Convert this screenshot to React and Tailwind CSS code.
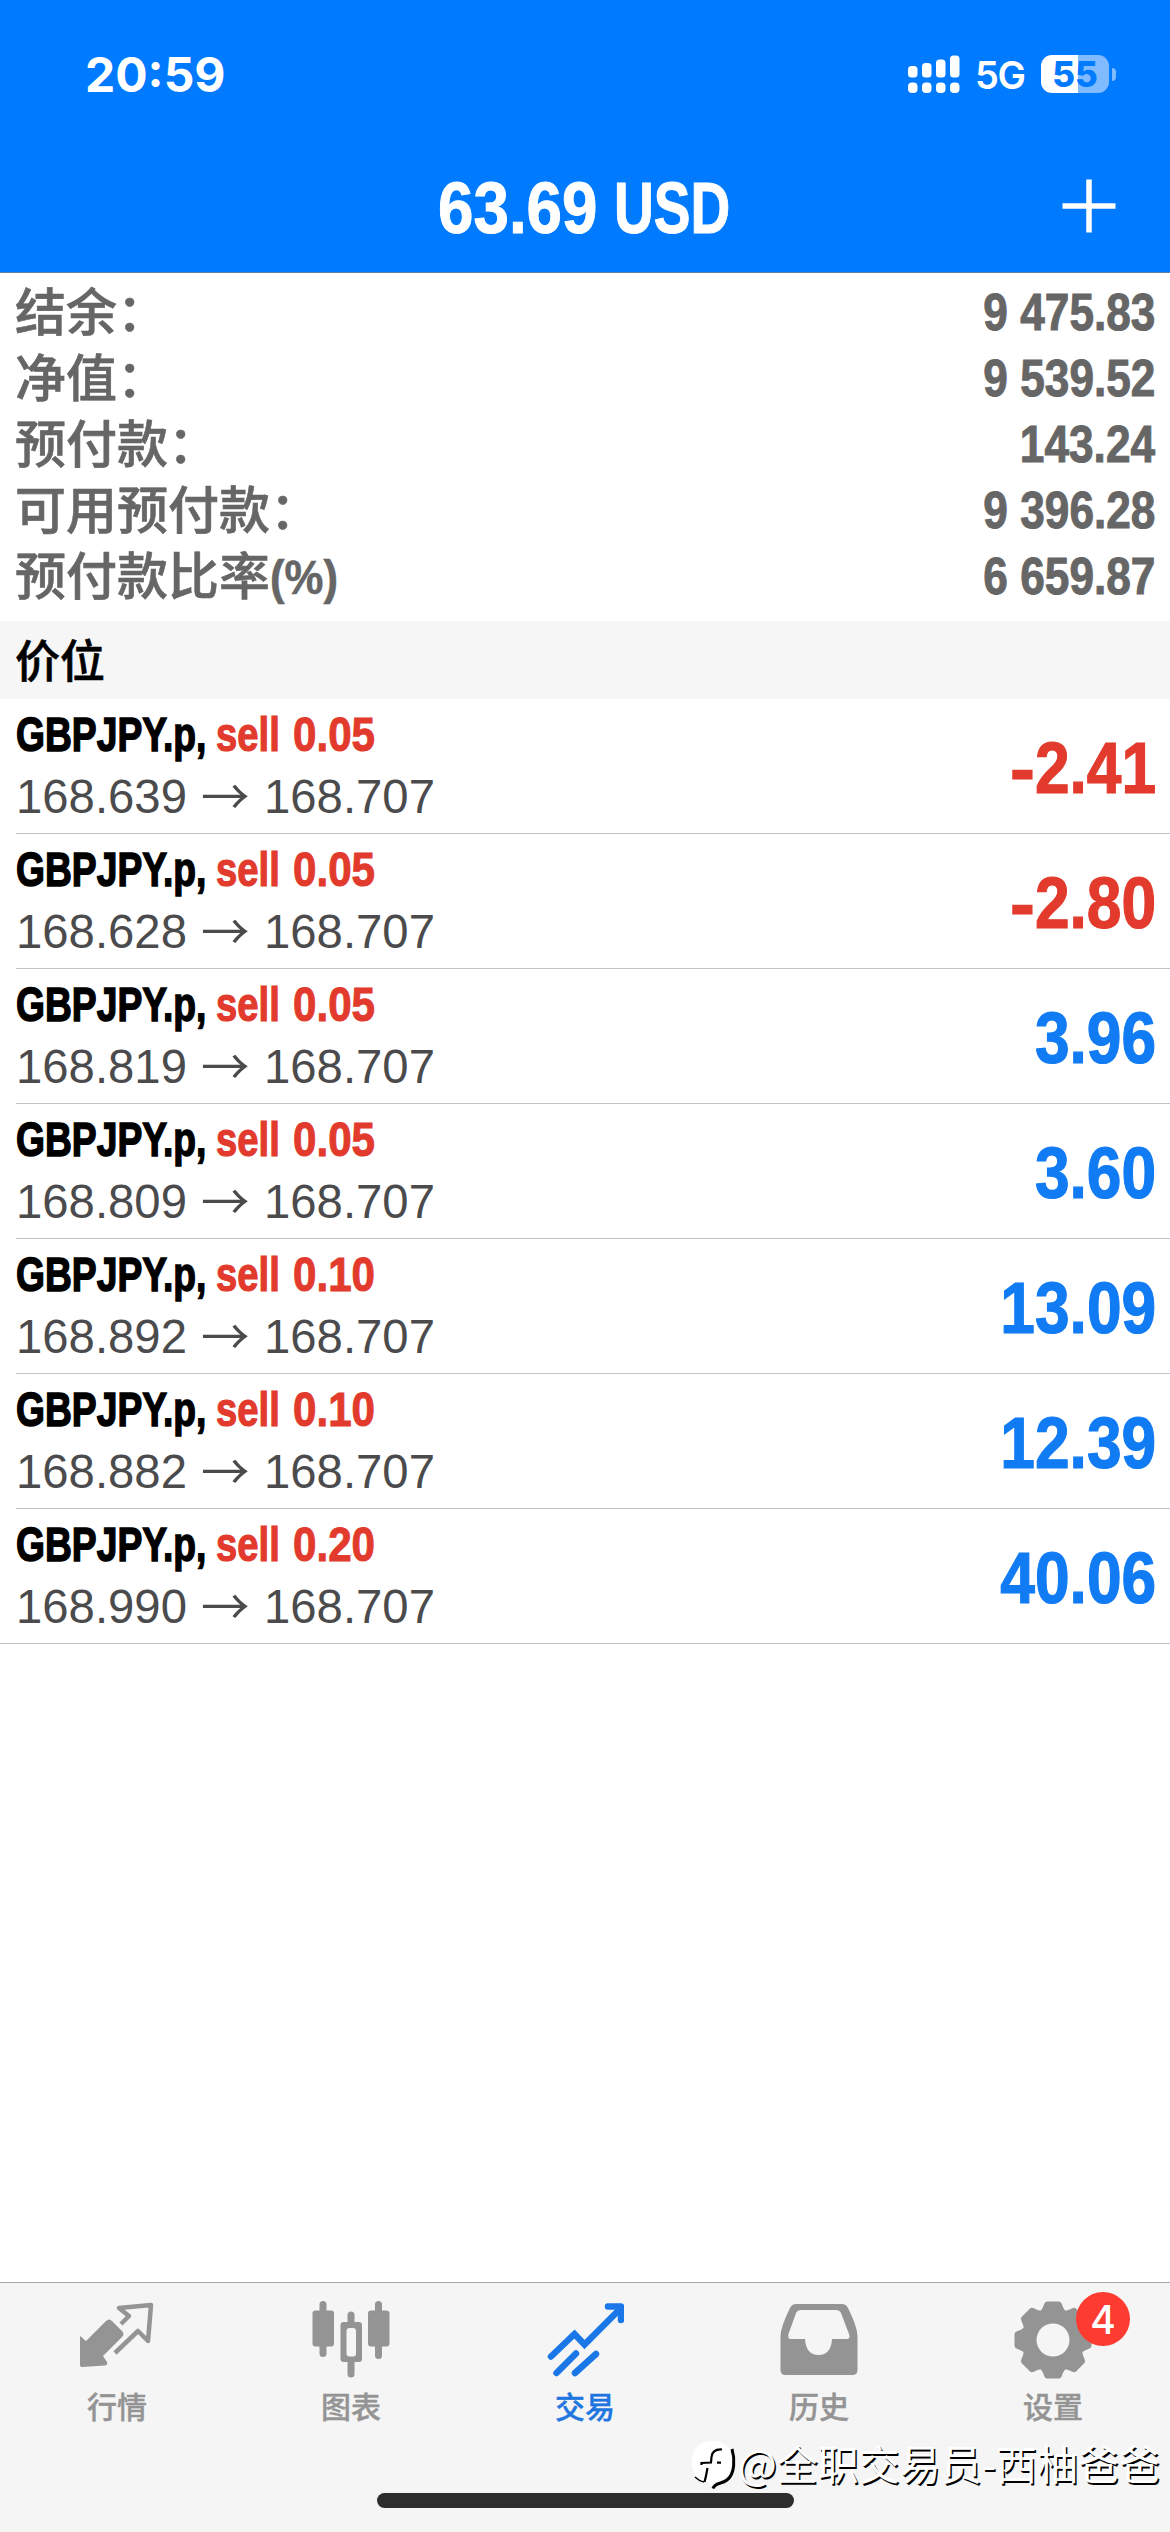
import React from "react";

const SANS = "font-['Liberation_Sans',Arial,sans-serif]";
const CJK = "font-['Liberation_Sans','Noto_Sans_CJK_SC',sans-serif]";

const summary = [
  { label: "结余：", value: "9 475.83" },
  { label: "净值：", value: "9 539.52" },
  { label: "预付款：", value: "143.24" },
  { label: "可用预付款：", value: "9 396.28" },
  { label: "预付款比率", suffix: "(%)", value: "6 659.87" },
];

const positions = [
  { lots: "0.05", open: "168.639", profit: "-2.41" },
  { lots: "0.05", open: "168.628", profit: "-2.80" },
  { lots: "0.05", open: "168.819", profit: "3.96" },
  { lots: "0.05", open: "168.809", profit: "3.60" },
  { lots: "0.10", open: "168.892", profit: "13.09" },
  { lots: "0.10", open: "168.882", profit: "12.39" },
  { lots: "0.20", open: "168.990", profit: "40.06" },
];

function Signal() {
  return (
    <svg width="52" height="38" viewBox="0 0 52 38" fill="white">
      <rect x="0" y="11" width="9.5" height="11.5" rx="3.5" />
      <rect x="14" y="8" width="9.5" height="14.5" rx="3.5" />
      <rect x="28" y="4.5" width="9.5" height="18" rx="3.5" />
      <rect x="42" y="0.5" width="9.5" height="22" rx="3.5" />
      <rect x="0" y="27.5" width="9.5" height="10.5" rx="4" />
      <rect x="14" y="27.5" width="9.5" height="10.5" rx="4" />
      <rect x="28" y="27.5" width="9.5" height="10.5" rx="4" />
      <rect x="42" y="27.5" width="9.5" height="10.5" rx="4" />
    </svg>
  );
}

function StatusBar() {
  return (
    <div className="flex h-[148px] items-center justify-between pl-[85px] pr-[54px] font-['Inter',sans-serif] text-white">
      <div className="pt-[2px] text-[48px] leading-none font-bold">20:59</div>
      <div className="flex items-center">
        <Signal />
        <div className="ml-[15px] w-[52px] pt-[2px] text-[38px] leading-none font-semibold tracking-[-1.5px] whitespace-nowrap">5G</div>
        <div className="ml-[14px] flex h-[38px] w-[68px] items-center justify-center rounded-[11px] bg-[linear-gradient(90deg,#fff_0_54%,#80bbff_54%)] text-[35px] leading-none font-extrabold text-[#007aff]">
          55
        </div>
        <div className="ml-[3px] h-[13px] w-[4px] rounded-r-full bg-[#80bbff]" />
      </div>
    </div>
  );
}

function Header() {
  return (
    <header className="h-[273px] border-b border-[#5b7fae] bg-[#007aff]">
      <StatusBar />
      <div className="grid h-[115px] grid-cols-[200px_1fr_200px] items-center text-white">
        <div />
        <div
          className={`${SANS} flex justify-center pt-[4px] text-[72px] leading-none font-bold whitespace-nowrap [-webkit-text-stroke:1px_white]`}
        >
          <span className="w-[176px] origin-left scale-x-[0.885]">63.69</span>
          <span className="w-[118px] origin-left scale-x-[0.765]">USD</span>
        </div>
        <div className="flex justify-end pr-[54px]">
          <svg width="54" height="54" viewBox="0 0 54 54" stroke="white" strokeWidth="5.5">
            <path d="M27 0.5v53M0.5 27h53" />
          </svg>
        </div>
      </div>
    </header>
  );
}

function SummaryRow({ label, suffix, value }) {
  return (
    <div className="flex h-[66px] items-center justify-between pr-[15px] pl-[15px] text-[#666666]">
      <div
        className={`${CJK} flex items-center pt-[4px] text-[51px] leading-[66px] font-medium whitespace-nowrap [-webkit-text-stroke:0.6px_#666666]`}
      >
        {label}
        {suffix && (
          <span className="inline-block origin-left scale-x-[0.91] text-[48px] font-bold">{suffix}</span>
        )}
      </div>
      <div
        className={`${SANS} origin-right scale-x-[0.85] text-[52px] leading-[66px] font-bold whitespace-nowrap [-webkit-text-stroke:1px_#666666]`}
      >
        {value}
      </div>
    </div>
  );
}

function PositionRow({ lots, open, profit, last }) {
  const loss = profit.startsWith("-");
  return (
    <div className={last ? "border-b border-[#c4c4c6]" : "ml-4 border-b border-[#c4c4c6]"}>
      <div className={`${SANS} flex h-[134px] items-center justify-between pr-[14px] ${last ? "pl-4" : ""}`}>
        <div className="flex h-full flex-col pt-[3px]">
          <div className="flex h-[63px] items-center text-[49px] leading-[62px] font-bold whitespace-nowrap">
            <div className="w-[200px] text-black [-webkit-text-stroke:1.5px_black]">
              <span className="inline-block origin-left scale-x-[0.76]">GBPJPY.p,</span>
            </div>
            <div className="w-[77px] text-[#e23a2c] [-webkit-text-stroke:1.2px_#e23a2c]">
              <span className="inline-block origin-left scale-x-[0.78]">sell</span>
            </div>
            <div className="text-[#e23a2c] [-webkit-text-stroke:1px_#e23a2c]">
              <span className="inline-block origin-left scale-x-[0.86]">{lots}</span>
            </div>
          </div>
          <div className="flex h-[62px] items-center text-[48.5px] leading-[62px] whitespace-nowrap text-[#4b4b4d]">
            <span className="w-[185px] origin-left scale-x-[0.975]">{open}</span>
            <span className="w-[63px] pb-[5px] font-['Noto_Sans_CJK_SC',sans-serif]">→</span>
            <span className="origin-left scale-x-[0.975]">168.707</span>
          </div>
        </div>
        <div
          className={`origin-right scale-x-[0.865] pt-[4px] text-[72px] leading-none font-bold whitespace-nowrap ${
            loss
              ? "text-[#e23a2c] [-webkit-text-stroke:1.2px_#e23a2c]"
              : "text-[#117bf3] [-webkit-text-stroke:1.2px_#117bf3]"
          }`}
        >
          {loss && <span className="inline-block origin-right scale-x-[1.2]">-</span>}
          {loss ? profit.slice(1) : profit}
        </div>
      </div>
    </div>
  );
}

function QuotesIcon() {
  return (
    <svg width="78" height="78" viewBox="0 0 78 78" fill="#949494">
      <path d="M2 35l6 5 20-20q3-3 6 0l10 10q3 3 0 6L25 55l4 6q1 3-2 3.500L4 66q-2 0-2-2z" />
      <path
        d="M43 23l8-8-10-8L73 4l-3 36-10-10L37 52"
        fill="none"
        stroke="#949494"
        strokeWidth="4.500"
        strokeLinejoin="round"
      />
    </svg>
  );
}

function ChartIcon() {
  return (
    <svg width="78" height="78" viewBox="0 0 78 78" fill="#949494">
      <rect x="7.500" y="0" width="7" height="56" rx="3.500" />
      <rect x="0.500" y="9.500" width="21.500" height="36" rx="3" />
      <rect x="63" y="0" width="7" height="58" rx="3.500" />
      <rect x="56" y="9.500" width="21.500" height="36" rx="3" />
      <rect x="35.500" y="10.500" width="7" height="66" rx="3.500" />
      <rect x="28.500" y="21" width="21.500" height="40" rx="3" />
      <rect x="34.500" y="27" width="9.500" height="28.500" rx="3" fill="#f5f5f5" />
    </svg>
  );
}

function TradeIcon() {
  return (
    <svg width="78" height="78" viewBox="0 0 78 78" fill="none" stroke="#1a77e8" strokeWidth="6.500" strokeLinecap="round" strokeLinejoin="miter">
      <path d="M5 55.500L28.500 33l10 10.500L74 8" />
      <path d="M62 5.500h13v13.500" strokeLinejoin="round" />
      <path d="M10.500 72L30 52.500M29 72L50 53" />
    </svg>
  );
}

function HistoryIcon() {
  return (
    <svg width="78" height="78" viewBox="0 0 78 78" fill="#949494">
      <path
        fillRule="evenodd"
        d="M16 3h46q4 0 6 4 9 18 9.500 28v34q0 5-5 5H5.500q-5 0-5-5V35Q1 25 10 7q2-4 6-4zM21 9q-3.500 0-5 3L8.500 33q-1 5 2 5H25q1 16 13.500 16T52 38h15q3.500 0 2-5L61 12q-1.500-3-5-3z"
      />
    </svg>
  );
}

function SettingsIcon() {
  const teeth = [0, 45, 90, 135];
  return (
    <svg width="78" height="78" viewBox="-39 -39 78 78" fill="#949494">
      <circle r="31.500" />
      {teeth.map((angle) => (
        <path
          key={angle}
          transform={`rotate(${angle})`}
          d="M-6-38.500h12q2 0 3 3Q11-29 15-27V27Q11 29 9 35.500q-1 3-3 3H-6q-2 0-3-3Q-11 29-15 27V-27Q-11-29-9-35.500-8-38.500-6-38.500z"
        />
      ))}
      <circle r="16.500" fill="#f5f5f5" />
    </svg>
  );
}

const tabs = [
  { label: "行情", Icon: QuotesIcon },
  { label: "图表", Icon: ChartIcon },
  { label: "交易", Icon: TradeIcon, active: true },
  { label: "历史", Icon: HistoryIcon },
  { label: "设置", Icon: SettingsIcon, badge: "4" },
];

function TabBar() {
  return (
    <nav className="h-[250px] border-t border-[#a7a7aa] bg-[#f5f5f5]">
      <div className="grid h-[210px] grid-cols-5">
        {tabs.map(({ label, Icon, active, badge }) => (
          <div key={label} className="flex flex-col items-center pt-[18px]">
            <div className="relative h-[78px] w-[78px]">
              <Icon />
              {badge && (
                <div className="absolute -top-[9px] left-[62px] flex h-[54px] w-[54px] items-center justify-center rounded-full bg-[#fd3b30] font-['Inter',sans-serif] text-[39px] leading-none font-medium text-white">
                  {badge}
                </div>
              )}
            </div>
            <div
              className={`mt-[4px] font-['Noto_Sans_CJK_SC',sans-serif] text-[30px] leading-[44px] font-medium ${
                active
                  ? "text-[#1f76e0] [-webkit-text-stroke:0.4px_#1f76e0]"
                  : "text-[#949494] [-webkit-text-stroke:0.4px_#949494]"
              }`}
            >
              {label}
            </div>
          </div>
        ))}
      </div>
      <div className="mx-auto h-[15px] w-[417px] rounded-full bg-[#2d2d2d]" />
    </nav>
  );
}

function Watermark() {
  return (
    <div className="absolute right-[10px] bottom-[38px] flex items-center">
      <svg className="-mr-[2px]" width="48" height="50" viewBox="0 0 48 50">
        <path d="M21 47.500c2-6 8-4 14-8.500 8-6 8-21 5-31" fill="none" stroke="#000" strokeWidth="3" />
        <path d="M3 36q4 4 9 5" fill="none" stroke="#000" strokeWidth="1.500" />
        <path d="M20 0c13 0 20 7 20 20S34 38 27 40c-5 1-6 3-8 5-2-4-3-4-7-5C4 38 0 32 0 20S7 0 20 0z" fill="#fff" />
        <path d="M30 8.500c-7-.5-10 3-10.500 7.500l-.5 5.500M9.500 24v-2l10.500-.5M25 21.700h4M15.500 27c-1 5-1.500 9-3 14" fill="none" stroke="#000" strokeWidth="2.200" />
      </svg>
      <div className="pb-[7px] font-['Noto_Sans_CJK_SC',sans-serif] text-[41px] leading-[50px] whitespace-nowrap text-white [text-shadow:1.5px_1.5px_0_#000]">
        @全职交易员-西柚爸爸
      </div>
    </div>
  );
}

export default function App() {
  return (
    <div className="relative flex h-[2532px] w-[1170px] flex-col overflow-hidden bg-white">
      <Header />
      <section className="pt-[6px] pb-3">
        {summary.map((row) => (
          <SummaryRow key={row.label} {...row} />
        ))}
      </section>
      <div className="h-[78px] bg-[#f6f6f6] pl-[15px] font-['Noto_Sans_CJK_SC',sans-serif] text-[45px] leading-[75px] font-medium text-black [-webkit-text-stroke:0.6px_black]">
        价位
      </div>
      <main className="flex-1">
        {positions.map((row, i) => (
          <PositionRow key={row.open} {...row} last={i === positions.length - 1} />
        ))}
      </main>
      <TabBar />
      <Watermark />
    </div>
  );
}
